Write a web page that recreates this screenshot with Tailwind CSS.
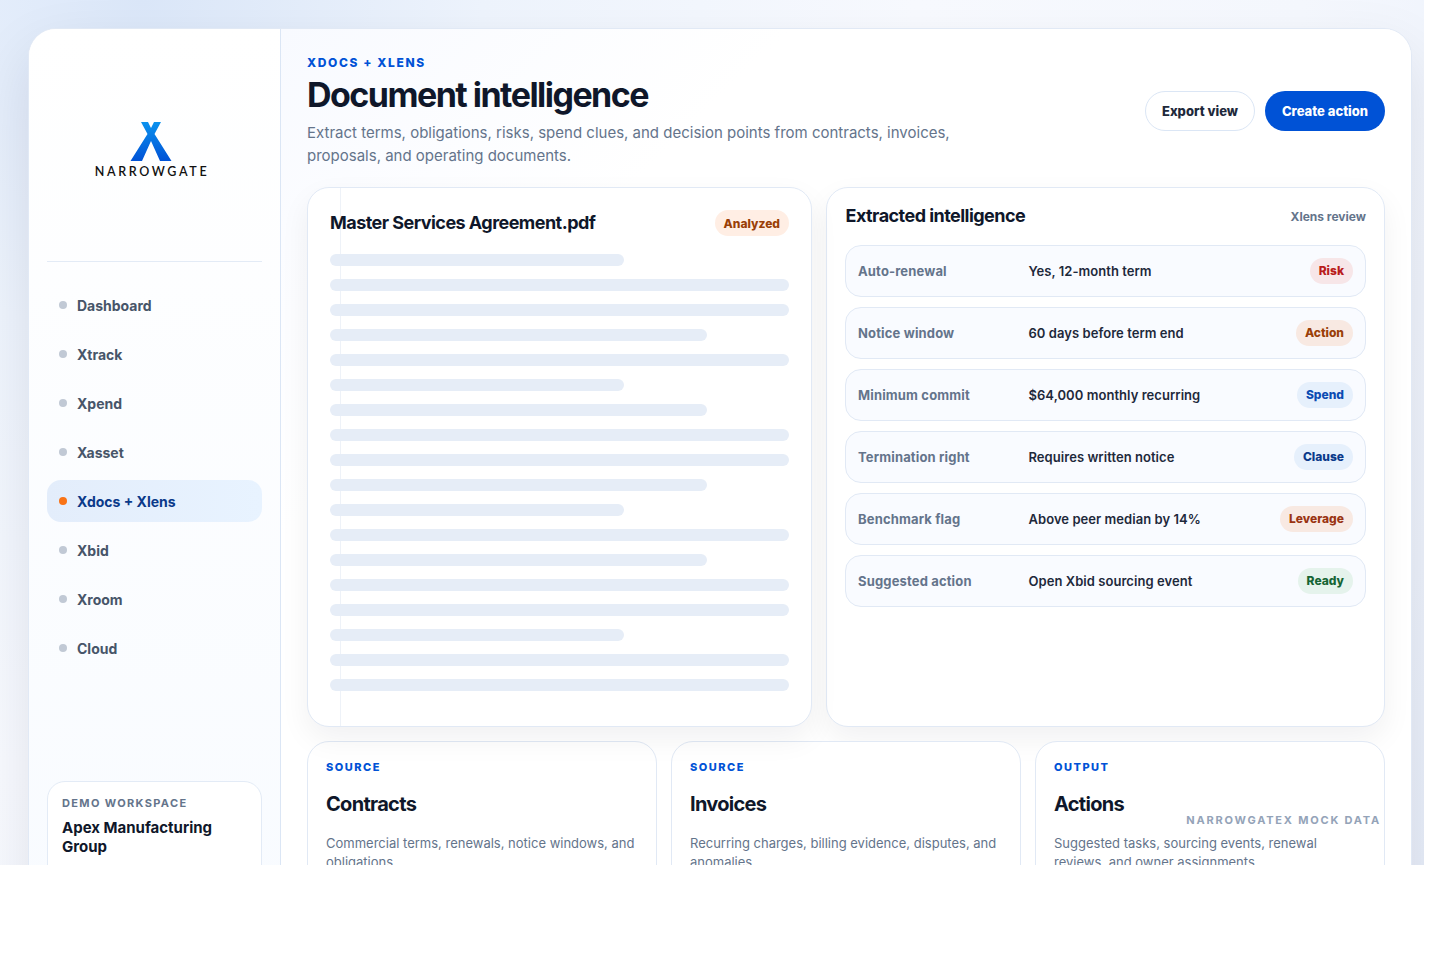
<!doctype html>
<html lang="en">
<head>
<meta charset="utf-8">
<title>Document intelligence</title>
<script src="https://cdn.jsdelivr.net/npm/@tailwindcss/browser@4"></script>
</head>
<body class="bg-white font-['Inter',sans-serif] text-[#0f172a]">
<div class="relative h-[865px] w-[1424px] overflow-hidden bg-[radial-gradient(circle_at_10%_0%,#dbe7f9_0%,#eef4fd_22%,#f8faff_50%,#f5f8fe_75%,#e8eef9_100%)] pt-7 pl-[29px] pr-3">
  <div class="grid min-h-[900px] grid-cols-[252px_1fr] overflow-hidden rounded-[28px] border border-[#e1e9f5] bg-[#fdfdff] shadow-[0_24px_60px_rgba(15,23,42,0.10)] -ml-px">
    <aside class="flex flex-col border-r border-[#dbe6f5] bg-[linear-gradient(180deg,#ffffff_0%,#f8fbff_100%)] px-[18px] pb-4">
      <div class="flex h-[233px] flex-col items-center justify-start border-b border-[#e3ebf6] pt-[93px] pr-[7px]">
        <svg class="block" width="42" height="40" viewBox="0 0 42 40" fill="none" aria-hidden="true">
          <defs><linearGradient id="lg" x1="0" y1="0" x2="0" y2="1"><stop offset="0" stop-color="#0b92ee"/><stop offset="1" stop-color="#0052d6"/></linearGradient></defs>
          <path fill="url(#lg)" d="M11 0H18L21 6L24 0H31L24.500 12L41.500 39H30L21 19L12 39H0.500L17.500 12Z"/>
        </svg>
        <div class="mt-[3px] pl-[2px] font-['Lato',sans-serif] text-[12.500px] leading-[14px] font-semibold tracking-[2.650px] text-[#111]">NARROWGATE</div>
      </div>
      <nav class="mt-[22px] flex flex-col gap-[7px]">
        <a class="flex h-[42px] items-center gap-[10px] rounded-[14px] pl-3 text-[14px] font-bold text-[#475569]"><span class="size-2 rounded-full bg-[#c1c9d5]"></span>Dashboard</a>
        <a class="flex h-[42px] items-center gap-[10px] rounded-[14px] pl-3 text-[14px] font-bold text-[#475569]"><span class="size-2 rounded-full bg-[#c1c9d5]"></span>Xtrack</a>
        <a class="flex h-[42px] items-center gap-[10px] rounded-[14px] pl-3 text-[14px] font-bold text-[#475569]"><span class="size-2 rounded-full bg-[#c1c9d5]"></span>Xpend</a>
        <a class="flex h-[42px] items-center gap-[10px] rounded-[14px] pl-3 text-[14px] font-bold text-[#475569]"><span class="size-2 rounded-full bg-[#c1c9d5]"></span>Xasset</a>
        <a class="flex h-[42px] items-center gap-[10px] rounded-[14px] bg-[linear-gradient(90deg,#e3edfb,#e8f3ff)] pl-3 text-[14px] font-bold text-[#0b3a8a]"><span class="size-2 rounded-full bg-[#f97316]"></span>Xdocs + Xlens</a>
        <a class="flex h-[42px] items-center gap-[10px] rounded-[14px] pl-3 text-[14px] font-bold text-[#475569]"><span class="size-2 rounded-full bg-[#c1c9d5]"></span>Xbid</a>
        <a class="flex h-[42px] items-center gap-[10px] rounded-[14px] pl-3 text-[14px] font-bold text-[#475569]"><span class="size-2 rounded-full bg-[#c1c9d5]"></span>Xroom</a>
        <a class="flex h-[42px] items-center gap-[10px] rounded-[14px] pl-3 text-[14px] font-bold text-[#475569]"><span class="size-2 rounded-full bg-[#c1c9d5]"></span>Cloud</a>
      </nav>
      <div class="mt-[112px] h-[120px] rounded-[18px] border border-[#e3ebf6] bg-white px-[14px] pt-[14px]">
        <div class="text-[11px] leading-[14px] font-bold tracking-[1.350px] text-[#64748b]">DEMO WORKSPACE</div>
        <div class="mt-[8px] text-[15px] leading-[19px] font-bold text-[#0f172a]">Apex Manufacturing Group</div>
      </div>
    </aside>
    <main class="flex min-w-0 flex-col bg-[linear-gradient(135deg,#f8faff_0%,#ffffff_25%,#ffffff_100%)] px-[26px] pt-[26px]">
      <header class="flex items-center justify-between">
        <div class="w-[680px]">
          <div class="text-[12px] leading-[15px] font-extrabold tracking-[1.620px] text-[#0052d6]">XDOCS + XLENS</div>
          <h1 class="mt-[6px] text-[34px] leading-[38px] font-bold tracking-[-1.530px] text-[#0f172a]">Document intelligence</h1>
          <p class="mt-[7px] text-[15px] leading-[23px] text-[#64748b]">Extract terms, obligations, risks, spend clues, and decision points from contracts, invoices, proposals, and operating documents.</p>
        </div>
        <div class="flex gap-[10px]">
          <button class="h-10 w-[110px] rounded-full border border-[#dbe6f5] bg-white pt-[2px] text-[13px] font-extrabold text-[#1e293b]">Export view</button>
          <button class="h-10 w-[120px] rounded-full bg-[#0052d6] pt-[2px] text-[13px] font-extrabold text-white">Create action</button>
        </div>
      </header>

      <div class="mt-[20px] grid grid-cols-[505px_559px] gap-[14px]">
        <section class="relative h-[540px] overflow-hidden rounded-[22px] border border-[#e1e9f5] bg-white px-[22px] shadow-[0_12px_30px_rgba(15,23,42,0.06)]">
          <div class="absolute inset-y-0 left-8 w-px bg-[#eef2f8]"></div>
          <div class="relative flex h-[66px] items-center justify-between pt-[4px]">
            <h2 class="pb-[2px] text-[18px] font-bold tracking-[-0.540px] text-[#0f172a]">Master Services Agreement.pdf</h2>
            <span class="flex h-[26px] items-center rounded-full bg-[#ffeee4] px-[9px] pt-[2px] text-[12px] font-extrabold text-[#9a3f07]">Analyzed</span>
          </div>
          <div class="relative flex flex-col gap-[13px]">
            <div class="h-3 w-[294px] rounded-full bg-[#e6edf7]"></div>
            <div class="h-3 w-full rounded-full bg-[#e6edf7]"></div>
            <div class="h-3 w-full rounded-full bg-[#e6edf7]"></div>
            <div class="h-3 w-[377px] rounded-full bg-[#e6edf7]"></div>
            <div class="h-3 w-full rounded-full bg-[#e6edf7]"></div>
            <div class="h-3 w-[294px] rounded-full bg-[#e6edf7]"></div>
            <div class="h-3 w-[377px] rounded-full bg-[#e6edf7]"></div>
            <div class="h-3 w-full rounded-full bg-[#e6edf7]"></div>
            <div class="h-3 w-full rounded-full bg-[#e6edf7]"></div>
            <div class="h-3 w-[377px] rounded-full bg-[#e6edf7]"></div>
            <div class="h-3 w-[294px] rounded-full bg-[#e6edf7]"></div>
            <div class="h-3 w-full rounded-full bg-[#e6edf7]"></div>
            <div class="h-3 w-[377px] rounded-full bg-[#e6edf7]"></div>
            <div class="h-3 w-full rounded-full bg-[#e6edf7]"></div>
            <div class="h-3 w-full rounded-full bg-[#e6edf7]"></div>
            <div class="h-3 w-[294px] rounded-full bg-[#e6edf7]"></div>
            <div class="h-3 w-full rounded-full bg-[#e6edf7]"></div>
            <div class="h-3 w-full rounded-full bg-[#e6edf7]"></div>
          </div>
        </section>

        <section class="h-[540px] rounded-[22px] border border-[#e1e9f5] bg-white px-[18px] shadow-[0_12px_30px_rgba(15,23,42,0.06)]">
          <div class="flex h-[57px] items-center justify-between">
            <h2 class="pb-[2px] pl-[0.5px] text-[18px] font-bold tracking-[-0.540px] text-[#0f172a]">Extracted intelligence</h2>
            <span class="text-[12px] font-bold text-[#64748b]">Xlens review</span>
          </div>
          <div class="flex flex-col gap-[10px]">
            <div class="flex h-[52px] items-center rounded-[16px] border border-[#e1e9f5] bg-[#f9fbff] px-3 text-[13px] font-semibold"><span class="w-[170.500px] pt-[2px] font-bold tracking-[0.150px] text-[#64748b]">Auto-renewal</span><span class="flex-1 pt-[2px] tracking-[0.050px] text-[#1e293b]">Yes, 12-month term</span><span class="flex h-[26px] items-center rounded-full bg-[#f7e6e8] px-[9px] text-[12px] font-extrabold text-[#b91c1c]">Risk</span></div>
            <div class="flex h-[52px] items-center rounded-[16px] border border-[#e1e9f5] bg-[#f9fbff] px-3 text-[13px] font-semibold"><span class="w-[170.500px] pt-[2px] font-bold tracking-[0.150px] text-[#64748b]">Notice window</span><span class="flex-1 pt-[2px] tracking-[0.050px] text-[#1e293b]">60 days before term end</span><span class="flex h-[26px] items-center rounded-full bg-[#f8e9e2] px-[9px] text-[12px] font-extrabold text-[#9a3f07]">Action</span></div>
            <div class="flex h-[52px] items-center rounded-[16px] border border-[#e1e9f5] bg-[#f9fbff] px-3 text-[13px] font-semibold"><span class="w-[170.500px] pt-[2px] font-bold tracking-[0.150px] text-[#64748b]">Minimum commit</span><span class="flex-1 pt-[2px] tracking-[0.050px] text-[#1e293b]">$64,000 monthly recurring</span><span class="flex h-[26px] items-center rounded-full bg-[#e6f0fc] px-[9px] text-[12px] font-extrabold text-[#0b4bb3]">Spend</span></div>
            <div class="flex h-[52px] items-center rounded-[16px] border border-[#e1e9f5] bg-[#f9fbff] px-3 text-[13px] font-semibold"><span class="w-[170.500px] pt-[2px] font-bold tracking-[0.150px] text-[#64748b]">Termination right</span><span class="flex-1 pt-[2px] tracking-[0.050px] text-[#1e293b]">Requires written notice</span><span class="flex h-[26px] items-center rounded-full bg-[#e6f0fc] px-[9px] text-[12px] font-extrabold text-[#0b3a8a]">Clause</span></div>
            <div class="flex h-[52px] items-center rounded-[16px] border border-[#e1e9f5] bg-[#f9fbff] px-3 text-[13px] font-semibold"><span class="w-[170.500px] pt-[2px] font-bold tracking-[0.150px] text-[#64748b]">Benchmark flag</span><span class="flex-1 pt-[2px] tracking-[0.050px] text-[#1e293b]">Above peer median by 14%</span><span class="flex h-[26px] items-center rounded-full bg-[#f8e9e2] px-[9px] text-[12px] font-extrabold text-[#9a3412]">Leverage</span></div>
            <div class="flex h-[52px] items-center rounded-[16px] border border-[#e1e9f5] bg-[#f9fbff] px-3 text-[13px] font-semibold"><span class="w-[170.500px] pt-[2px] font-bold tracking-[0.150px] text-[#64748b]">Suggested action</span><span class="flex-1 pt-[2px] tracking-[0.050px] text-[#1e293b]">Open Xbid sourcing event</span><span class="flex h-[26px] items-center rounded-full bg-[#e5f3ec] px-[9px] text-[12px] font-extrabold text-[#166534]">Ready</span></div>
          </div>
        </section>
      </div>

      <div class="mt-[14px] grid grid-cols-3 gap-[14px]">
        <article class="h-[200px] rounded-[22px] border border-[#e1e9f5] bg-white px-[18px] pt-[18px]">
          <div class="text-[11px] leading-[14px] font-extrabold tracking-[1.500px] text-[#0052d6]">SOURCE</div>
          <h3 class="mt-[16px] text-[20px] leading-[28px] font-bold tracking-[-0.700px] text-[#0f172a]">Contracts</h3>
          <p class="mt-[16px] text-[13px] leading-[19px] text-[#64748b]">Commercial terms, renewals, notice windows, and obligations.</p>
        </article>
        <article class="h-[200px] rounded-[22px] border border-[#e1e9f5] bg-white px-[18px] pt-[18px]">
          <div class="text-[11px] leading-[14px] font-extrabold tracking-[1.500px] text-[#0052d6]">SOURCE</div>
          <h3 class="mt-[16px] text-[20px] leading-[28px] font-bold tracking-[-0.700px] text-[#0f172a]">Invoices</h3>
          <p class="mt-[16px] text-[13px] leading-[19px] text-[#64748b]">Recurring charges, billing evidence, disputes, and anomalies.</p>
        </article>
        <article class="h-[200px] rounded-[22px] border border-[#e1e9f5] bg-white px-[18px] pt-[18px]">
          <div class="text-[11px] leading-[14px] font-extrabold tracking-[1.500px] text-[#0052d6]">OUTPUT</div>
          <h3 class="mt-[16px] text-[20px] leading-[28px] font-bold tracking-[-0.700px] text-[#0f172a]">Actions</h3>
          <p class="mt-[16px] text-[13px] leading-[19px] text-[#64748b]">Suggested tasks, sourcing events, renewal reviews, and owner assignments.</p>
        </article>
      </div>
    </main>
  </div>
  <div class="absolute top-[813px] right-[43px] text-[11px] leading-[14px] font-bold tracking-[1.800px] text-[#94a3b8]">NARROWGATEX MOCK DATA</div>
</div>
</body>
</html>
